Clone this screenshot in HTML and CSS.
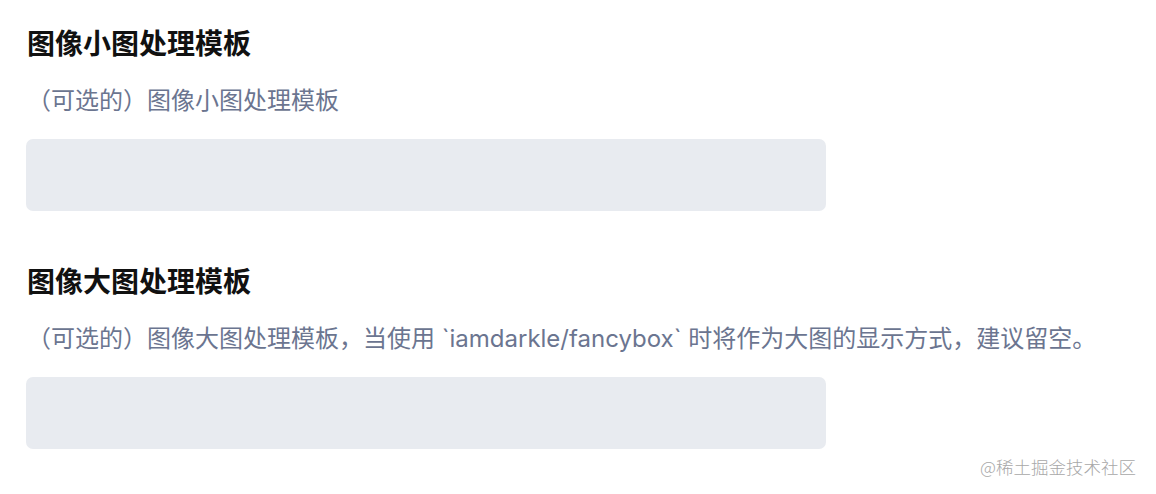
FILE: index.html
```html
<!DOCTYPE html>
<html lang="zh-CN">
<head>
<meta charset="utf-8">
<title>图像处理模板</title>
<link rel="stylesheet" href="styles.css">
</head>
<body>
<main class="page">
  <section class="field">
    <h2 class="field-title">图像小图处理模板</h2>
    <p class="field-desc">（可选的）图像小图处理模板</p>
    <div class="field-input"></div>
  </section>
  <section class="field">
    <h2 class="field-title">图像大图处理模板</h2>
    <p class="field-desc">（可选的）图像大图处理模板，当使用 `iamdarkle/fancybox` 时将作为大图的显示方式，建议留空。</p>
    <div class="field-input"></div>
  </section>
</main>
<div class="watermark">@稀土掘金技术社区</div>
</body>
</html>
```
FILE: styles.css
```css
html, body {
  margin: 0;
  padding: 0;
  background: #ffffff;
}
body {
  font-family: Inter, "Noto Sans CJK SC", sans-serif;
  width: 1156px;
  height: 494px;
  overflow: hidden;
  position: relative;
}
.page {
  padding: 22px 0 0 26px;
  display: flex;
  flex-direction: column;
  gap: 49px;
}
.field {
  display: flex;
  flex-direction: column;
}
.field-title {
  margin: 0;
  padding-left: 1px;
  font-size: 28px;
  line-height: 40px;
  font-weight: 700;
  color: #111111;
  font-family: "Noto Sans CJK SC", sans-serif;
}
.field-desc {
  margin: 21px 0 0 0;
  padding-left: 1px;
  font-size: 24px;
  line-height: 36px;
  color: #6b7590;
  font-weight: 400;
}
.field-input {
  margin-top: 20px;
  width: 800px;
  height: 72px;
  background: #e8ebf0;
  border-radius: 7px;
}
.watermark {
  position: absolute;
  right: 20px;
  bottom: 14px;
  font-size: 17.5px;
  line-height: 26px;
  color: #a8a8a8;
  font-family: "Noto Sans CJK SC", sans-serif;
  font-weight: 300;
}
```
